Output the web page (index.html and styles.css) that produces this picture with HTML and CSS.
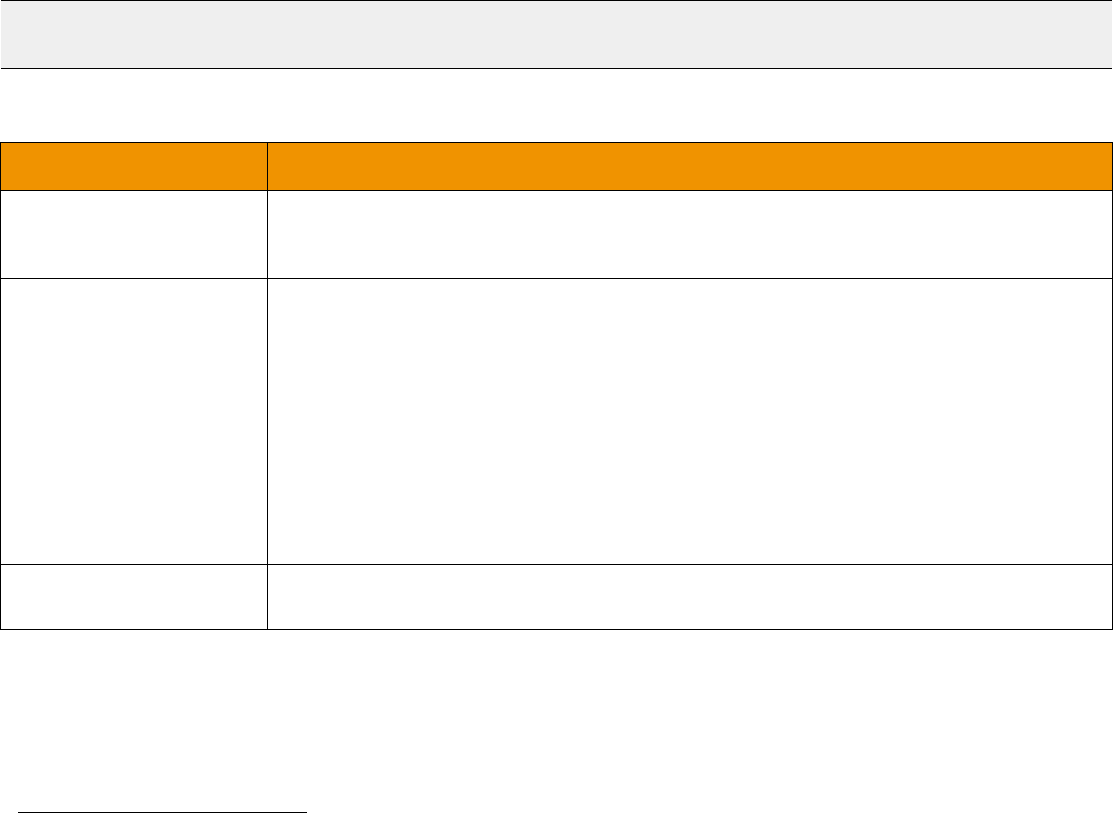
FILE: index.html
```html
<!DOCTYPE html>
<html>
<head>
    <title>Table</title>
    <link rel="stylesheet" href="styles.css">
</head>
<body>
    <div class="topbar"></div>

    <table class="grid">
        <tr class="head">
            <th class="first"></th>
            <th></th>
        </tr>
        <tr class="row-a">
            <td></td>
            <td></td>
        </tr>
        <tr class="row-b">
            <td></td>
            <td></td>
        </tr>
        <tr class="row-c">
            <td></td>
            <td></td>
        </tr>
    </table>

    <div class="footnote"></div>
</body>
</html>
```

FILE: styles.css
```css
body {
    font-family: "Liberation Sans", Arial, sans-serif;
    background-color: #fff;
    margin: 0;
}

.topbar {
    height: 67px;
    margin: 0 1px;
    background-color: #efefef;
    border-top: 1px solid #000;
    border-bottom: 1px solid #000;
}

.grid {
    width: 1113px;
    margin-top: 73px;
    border-collapse: collapse;
}

.grid th,
.grid td {
    border: 1px solid #000;
    padding: 0;
}

.grid th {
    background-color: #f09300;
}

.grid .first {
    width: 266px;
}

.head {
    height: 48px;
}

.row-a {
    height: 88px;
}

.row-b {
    height: 286px;
}

.row-c {
    height: 65px;
}

.footnote {
    width: 289px;
    margin: 182px 0 0 18px;
    border-top: 1px solid #000;
}
```
